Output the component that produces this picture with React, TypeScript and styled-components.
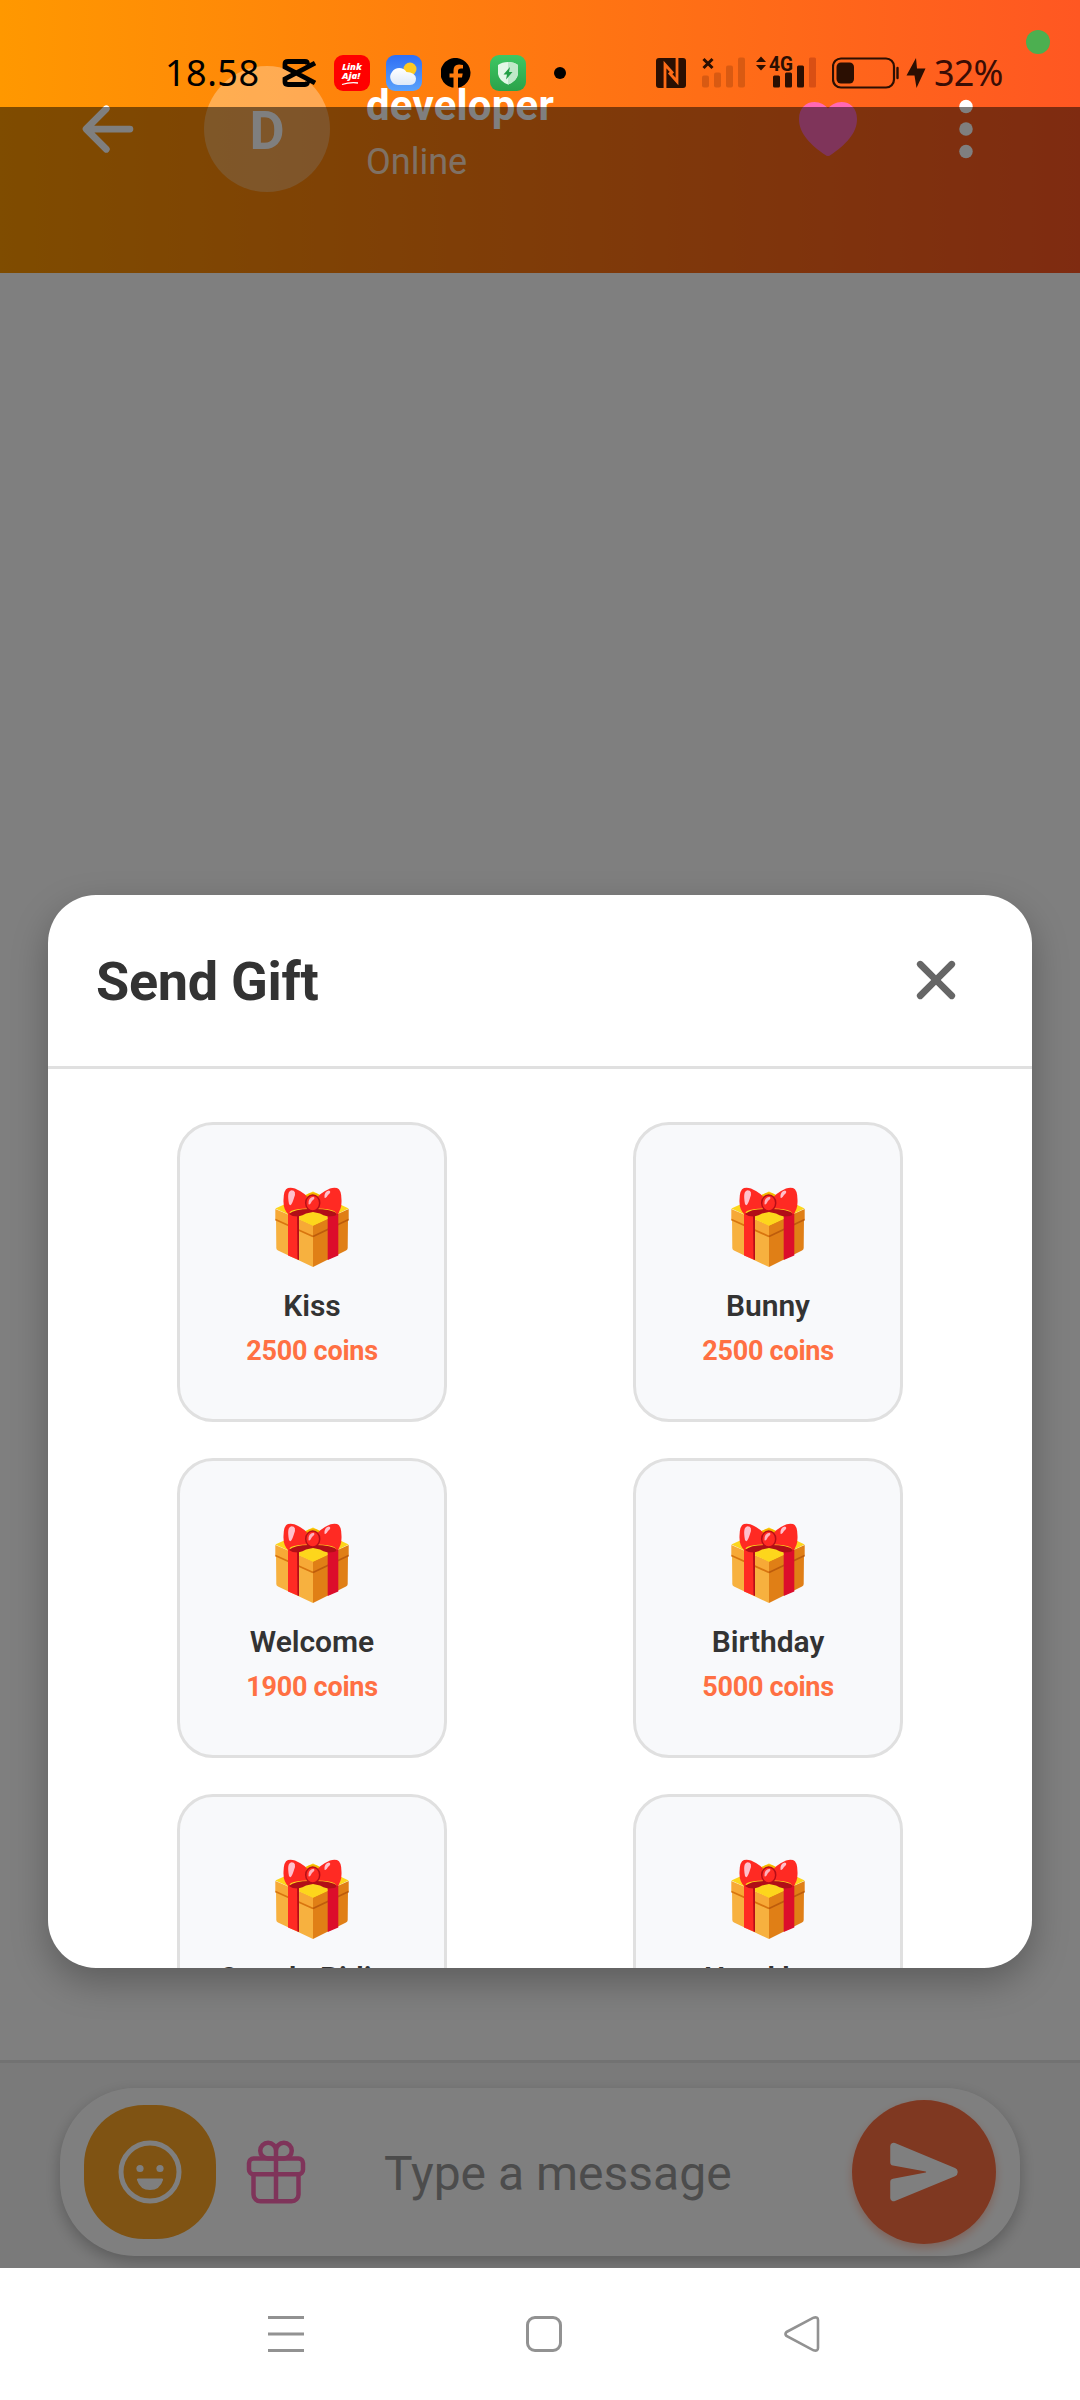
import React from "react";
import styled, { createGlobalStyle } from "styled-components";
import { IoArrowBack, IoHeart, IoEllipsisVertical, IoClose, IoSend, IoGiftOutline } from "react-icons/io5";

const Global = createGlobalStyle`
  body { margin: 0; font-family: Roboto, "Noto Sans", sans-serif; }
  * { box-sizing: border-box; }
`;

const Phone = styled.div`
  position: relative;
  display: flex;
  flex-direction: column;
  width: 1080px;
  height: 2400px;
  overflow: hidden;
  background: #fff;
`;

const Header = styled.header`
  display: flex;
  align-items: flex-start;
  height: 273px;
  padding: 66px 84px 0 78px;
  color: #fff;
  background: linear-gradient(90deg, #ff9800, #ff5722);
`;
const HeaderIcon = styled.div<{ $size: number; $gap?: number; $color?: string }>`
  display: flex;
  align-items: center;
  justify-content: center;
  width: ${(p) => p.$size}px;
  height: 126px;
  margin-right: ${(p) => p.$gap ?? 0}px;
  color: ${(p) => p.$color ?? "#fff"};
  svg { flex: none; }
`;
const Avatar = styled.div`
  display: flex;
  align-items: center;
  justify-content: center;
  width: 126px;
  height: 126px;
  margin-right: 36px;
  padding-top: 3px;
  border-radius: 50%;
  background: rgba(255, 255, 255, 0.3);
  font-size: 54px;
  font-weight: 700;
`;
const Contact = styled.div`
  flex: 1;
  display: flex;
  flex-direction: column;
  padding-top: 13px;
`;
const ContactName = styled.div`
  font-size: 42px;
  line-height: 54px;
  font-weight: 700;
  letter-spacing: 0.2px;
`;
const Presence = styled.div`
  font-size: 36px;
  line-height: 42px;
  margin-top: 8px;
  color: rgba(255, 255, 255, 0.8);
`;

const Chat = styled.main`
  flex: 1;
  background: #fff;
`;

const Composer = styled.section`
  height: 208px;
  padding: 25px 60px 0;
  border-top: 3px solid #e4e4e4;
  background: #f5f5f5;
`;
const Field = styled.div`
  display: flex;
  align-items: center;
  height: 168px;
  padding: 0 24px;
  border-radius: 75px;
  background: #fff;
  box-shadow: 0 6px 16px rgba(0, 0, 0, 0.25);
`;
const EmojiButton = styled.div`
  display: flex;
  align-items: center;
  justify-content: center;
  width: 132px;
  height: 134px;
  border-radius: 60px;
  background: #ffa726;
`;
const GiftButton = styled.div`
  display: flex;
  width: 72px;
  margin-left: 24px;
  color: #ff69b4;
`;
const Placeholder = styled.div`
  flex: 1;
  padding: 4px 0 0 72px;
  font-size: 48px;
  line-height: 56px;
  color: #999;
`;
const SendButton = styled.div`
  display: flex;
  align-items: center;
  justify-content: center;
  width: 144px;
  height: 144px;
  border-radius: 50%;
  color: #fff;
  background: #ff7043;
  box-shadow: 0 4px 10px rgba(255, 112, 67, 0.4);
`;

const NavBar = styled.nav`
  display: flex;
  align-items: center;
  justify-content: space-between;
  height: 132px;
  padding: 0 258px 0 266px;
  background: #fff;
`;

const Scrim = styled.div`
  position: absolute;
  top: 107px;
  left: 0;
  width: 1080px;
  height: 2161px;
  display: flex;
  align-items: flex-start;
  justify-content: center;
  padding-top: 788px;
  background: rgba(0, 0, 0, 0.5);
`;
const Dialog = styled.div`
  display: flex;
  flex-direction: column;
  width: 984px;
  height: 1073px;
  overflow: hidden;
  border-radius: 48px;
  background: #fff;
  box-shadow: 0 14px 36px rgba(0, 0, 0, 0.27);
`;
const DialogHeader = styled.div`
  display: flex;
  align-items: center;
  justify-content: space-between;
  flex: none;
  height: 174px;
  padding: 0 60px 14px 48px;
  border-bottom: 3px solid #e0e0e0;
`;
const DialogTitle = styled.h2`
  margin: 0;
  padding-top: 17px;
  font-size: 54px;
  line-height: 64px;
  font-weight: 700;
  letter-spacing: -0.3px;
  color: #333;
`;
const CloseButton = styled.div`
  display: flex;
  padding-top: 13px;
  color: #666;
`;
const GiftGrid = styled.div`
  display: grid;
  grid-template-columns: repeat(2, 456px);
  justify-content: center;
  justify-items: center;
  row-gap: 36px;
  padding-top: 53px;
`;
const GiftCard = styled.div`
  display: flex;
  flex-direction: column;
  align-items: center;
  width: 270px;
  height: 300px;
  padding-top: 62px;
  border: 3px solid #e0e0e0;
  border-radius: 36px;
  background: #f8f9fb;
`;
const GiftName = styled.div`
  margin-top: 21px;
  font-size: 30px;
  line-height: 36px;
  font-weight: 600;
  letter-spacing: -0.05px;
  color: #333;
  white-space: nowrap;
`;
const GiftPrice = styled.div`
  margin-top: 11px;
  font-size: 27px;
  line-height: 32px;
  font-weight: 700;
  letter-spacing: -0.25px;
  color: #ff7043;
`;

const StatusBar = styled.div`
  position: absolute;
  top: 0;
  left: 0;
  display: flex;
  align-items: center;
  width: 1080px;
  height: 107px;
  padding: 38px 0 0 165px;
  font-family: "Noto Sans", sans-serif;
  font-size: 36px;
`;
const Clock = styled.div<{ $width: number; $tone: string; $spacing: number }>`
  width: ${(p) => p.$width}px;
  line-height: 50px;
  letter-spacing: ${(p) => p.$spacing}px;
  color: ${(p) => p.$tone};
`;
const StatusIcon = styled.div<{ $gap: number }>`
  display: flex;
  margin-right: ${(p) => p.$gap}px;
`;
const PrivacyDot = styled.div`
  position: absolute;
  top: 30px;
  left: 1026px;
  width: 24px;
  height: 24px;
  border-radius: 50%;
  background: #4caf50;
`;

const INK = "#2b0f02";

const GiftBox = () => (
  <svg width="74" height="80" viewBox="0 0 74 80">
    <path d="M1 30 L38 47 V80 L3 63.500 Q1.300 62.500 1.300 61Z" fill="#f7b13f" />
    <path d="M73 30 L38 47 V80 L71 63.500 Q72.700 62.500 72.700 61Z" fill="#e07f16" />
    <path d="M0.300 22 L38 38 V49.500 L0.300 32.500Z" fill="#f7a936" />
    <path d="M73.700 22 L38 38 V49.500 L73.700 32.500Z" fill="#e07f16" />
    <path d="M0.300 32.500 L38 49.500" fill="none" stroke="#d8750f" strokeWidth="1.800" />
    <path d="M38 49.500 L73.700 32.500" fill="none" stroke="#bd5c0c" strokeWidth="1.800" />
    <path d="M0.300 21.500 L38 4.500 L73.700 21.500 L38 38.500Z" fill="#fdd61c" />
    <path d="M13 25 L23.800 29 V73 L13 68.500Z" fill="#ff2a23" />
    <path d="M22 29 H24 V73 L22.500 72.300Z" fill="#b50d18" />
    <path d="M52.700 29 L63.300 25 V68.500 L52.700 73Z" fill="#dc0d2b" />
    <path d="M23.800 32 L38 25.300 L52.700 32 L38 38.700Z" fill="#fdd61c" />
    <path d="M14 27 Q20 21.500 37 22 Q56 21.500 63 27 Q60 29.500 53 29.500 Q48 28.500 45 26.500 L38 25 L31 26.500 Q28 28.500 23 29.500 Q17 29.500 14 27Z" fill="#b10e17" />
    <path d="M30 9 Q37.700 2 46 9 V14 H30Z" fill="#f4b400" />
    <path d="M8.500 13 Q8.500 2.500 13 1 Q18 -.5 25 4 Q30 7 32 9.500 Q29 15 32 21.500 Q21 21.500 16 24 Q13.500 25.500 14 28 Q8 23 8.500 13Z" fill="#ff2a23" />
    <path d="M66.500 13 Q66.500 2.500 62 1 Q57 -.5 50 4 Q45 7 43 9.500 Q46 15 43 21.500 Q54 21.500 59 24 Q62 25.500 61.500 28 Q67 23 66.500 13Z" fill="#ff2a23" />
    <ellipse cx="37.700" cy="16" rx="7" ry="8" fill="#ff2a23" stroke="#b50d18" strokeWidth="1.500" />
    <path d="M14 17 Q11.500 4 16.500 3.200 Q22 3.500 19 11 Q16 21 14 17Z" fill="#ffc1cc" />
    <path d="M49.500 10.500 Q49 4.500 54 3.500 Q57 4.500 53 8 Q50.500 12.500 49.500 10.500Z" fill="#ffc1cc" />
    <path d="M33.500 17 Q33 10.500 38.500 9.800 Q41 11 37 14 Q34.500 19 33.500 17Z" fill="#ffb1bc" />
  </svg>
);

const Smiley = () => (
  <svg width="64" height="64" viewBox="0 0 64 64" fill="#fff">
    <circle cx="32" cy="32" r="29" fill="none" stroke="#fff" strokeWidth="5" />
    <circle cx="22" cy="28.500" r="3.600" />
    <circle cx="42" cy="28.500" r="3.600" />
    <path d="M20 38.500 H44 Q45.500 38.500 45 40 Q42 50 32 50 Q22 50 19 40 Q18.500 38.500 20 38.500Z" />
  </svg>
);

const CapCut = () => (
  <svg width="34" height="28" viewBox="0 0 34 28" fill="none" stroke="#000" strokeWidth="4.800">
    <path d="M33 4 L3 20 V23 Q3 25.500 6 25.500 H23 Q25.500 25.500 25.500 22.500 M33 24 L3 8 V5 Q3 2.500 6 2.500 H23 Q25.500 2.500 25.500 5.500" />
  </svg>
);

const LinkAja = () => (
  <svg width="36" height="36" viewBox="0 0 36 36">
    <rect width="36" height="36" rx="9" fill="#f00" />
    <g fill="#fff" fontFamily="Open Sans, sans-serif" fontWeight="800" fontStyle="italic">
      <text x="8" y="14.500" fontSize="9.500">Link</text>
      <text x="8" y="24" fontSize="9.500">Aja!</text>
    </g>
    <path d="M8 29.500 Q16 27 24 28" fill="none" stroke="#fff" strokeWidth="1.300" />
  </svg>
);

const Weather = () => (
  <svg width="36" height="36" viewBox="0 0 36 36">
    <defs>
      <linearGradient id="sky" x2="0" y2="1"><stop stopColor="#2f6ff5" /><stop offset="1" stopColor="#5ba2fb" /></linearGradient>
      <linearGradient id="cloud" x2="0" y2="1"><stop stopColor="#fff" /><stop offset="1" stopColor="#dfe9f8" /></linearGradient>
    </defs>
    <rect width="36" height="36" rx="9" fill="url(#sky)" />
    <circle cx="24" cy="14" r="6.500" fill="#fdc921" />
    <path d="M12 30 A8 8 0 0 1 6 17 A8.500 8.500 0 0 1 20.500 17 Q29 17 30 23.500 Q30 30 24 30Z" fill="url(#cloud)" />
  </svg>
);

const Facebook = () => (
  <svg width="30" height="30" viewBox="0 0 30 30">
    <path d="M11 29.500 A15 15 0 1 1 17 29.700 V19.500 H21 L21.700 15.500 H17 V13 Q17 10.500 20 10.500 H22 V7 Q12.500 4.500 12.500 12.500 V15.500 H8.500 V19.500 H12.500 V29.500Z" />
  </svg>
);

const Guard = () => (
  <svg width="36" height="36" viewBox="0 0 36 36">
    <defs><linearGradient id="leaf" x2="0" y2="1"><stop stopColor="#3dc763" /><stop offset="1" stopColor="#2ba24a" /></linearGradient></defs>
    <rect width="36" height="36" rx="9" fill="url(#leaf)" />
    <path d="M18 7 Q24 7 28 10 V19 Q27 26 18 29.500 Q9 26 8 19 V10 Q12 7 18 7Z" fill="#e3f8e7" />
    <path d="M18 7 Q24 7 28 10 V19 Q27 26 18 29.500Z" fill="#bfe9c9" />
    <path d="M20 12 L13.500 19.500 H17 L16 24.500 L22.500 17 H19Z" fill="#22a045" />
  </svg>
);

const Nfc = () => (
  <svg width="30" height="30" viewBox="0 0 30 30">
    <rect width="30" height="30" rx="3" fill={INK} />
    <path d="M9 30 V6.500 L17 15.500 M21 0 V23.500 L13 14.500" fill="none" stroke="#ff6c17" strokeWidth="2.800" />
  </svg>
);

const BARS = [
  { x: 0, h: 12 },
  { x: 12, h: 15 },
  { x: 24, h: 22 },
  { x: 36, h: 30 },
];

const NoSignal = () => (
  <svg width="44" height="34" viewBox="0 0 44 34">
    {BARS.map((b) => (
      <rect key={b.x} x={b.x} y={31.5 - b.h} width="7" height={b.h} rx="2" fill="#d95a12" />
    ))}
    <path d="M1.500 3 L10.500 12 M10.500 3 L1.500 12" stroke={INK} strokeWidth="3" />
  </svg>
);

const Signal4G = () => (
  <svg width="60" height="34" viewBox="0 0 60 34" fill={INK}>
    <path d="M0 6 L5 0.500 L10 6Z M0 9 L5 14.500 L10 9Z" />
    <text x="13" y="14.700" fontFamily="Roboto" fontWeight="700" fontSize="20" textLength="24" lengthAdjust="spacingAndGlyphs">4G</text>
    {BARS.map((b, i) => (
      <rect key={b.x} x={b.x + 17} y={31.5 - b.h} width="7" height={b.h} rx="1.500" fill={i < 3 ? INK : "#d94f14"} />
    ))}
  </svg>
);

const Battery = () => (
  <svg width="67" height="32" viewBox="0 0 67 32">
    <rect x="1" y="1.500" width="61" height="29" rx="8" fill="none" stroke={INK} strokeWidth="2.200" />
    <rect x="4.500" y="5.500" width="17.500" height="21" rx="4.500" fill={INK} />
    <path d="M65.500 11 V21" stroke={INK} strokeWidth="2.400" strokeLinecap="round" />
  </svg>
);

const Bolt = () => (
  <svg width="20" height="32" viewBox="0 0 20 32">
    <path d="M10 1 L0.500 18.500 H8.500 L10.500 31 L19.500 11.500 H11Z" fill={INK} />
  </svg>
);

const gifts = [
  { name: "Kiss", price: 2500 },
  { name: "Bunny", price: 2500 },
  { name: "Welcome", price: 1900 },
  { name: "Birthday", price: 5000 },
  { name: "Couple Riding", price: 5000 },
  { name: "Hand bag", price: 5000 },
];

export default function App() {
  return (
    <>
      <Global />
      <Phone>
        <Header>
          <HeaderIcon $size={60} $gap={66}><IoArrowBack size={72} /></HeaderIcon>
          <Avatar>D</Avatar>
          <Contact>
            <ContactName>developer</ContactName>
            <Presence>Online</Presence>
          </Contact>
          <HeaderIcon $size={60} $gap={78} $color="#ff69b4">
            <svg width="58" height="54" viewBox="0 0 58 54" fill="currentColor">
              <path d="M29 54 Q27.500 54 26 52.800 C12 43 0 32 0 17 C0 6 7 0 15.500 0 C21.500 0 26 3 29 6.500 C32 3 36.500 0 42.500 0 C51 0 58 6 58 17 C58 32 46 43 32 52.800 Q30.500 54 29 54Z" />
            </svg>
          </HeaderIcon>
          <HeaderIcon $size={60}><IoEllipsisVertical size={72} /></HeaderIcon>
        </Header>
        <Chat />
        <Composer>
          <Field>
            <EmojiButton><Smiley /></EmojiButton>
            <GiftButton><IoGiftOutline size={72} /></GiftButton>
            <Placeholder>Type a message</Placeholder>
            <SendButton><IoSend size={72} /></SendButton>
          </Field>
        </Composer>
        <NavBar>
          <svg width="40" height="40" viewBox="0 0 40 40" stroke="#929292" strokeWidth="3">
            <path d="M2 3.500 H38 M2 20 H38 M2 36.500 H38" />
          </svg>
          <svg width="40" height="40" viewBox="0 0 40 40" fill="none" stroke="#929292" strokeWidth="3">
            <rect x="3.500" y="3.500" width="33" height="33" rx="7.500" />
          </svg>
          <svg width="40" height="40" viewBox="0 0 40 40" fill="none" stroke="#929292" strokeWidth="2.600">
            <path d="M4.500 18 L31.500 3.700 Q36 2.500 36 6 V34 Q36 37.500 31.500 36.300 L4.500 22 Q2.500 20 4.500 18Z" />
          </svg>
        </NavBar>

        <Scrim>
          <Dialog>
            <DialogHeader>
              <DialogTitle>Send Gift</DialogTitle>
              <CloseButton><IoClose size={72} /></CloseButton>
            </DialogHeader>
            <GiftGrid>
              {gifts.map((g) => (
                <GiftCard key={g.name}>
                  <GiftBox />
                  <GiftName>{g.name}</GiftName>
                  <GiftPrice>{g.price} coins</GiftPrice>
                </GiftCard>
              ))}
            </GiftGrid>
          </Dialog>
        </Scrim>

        <StatusBar>
          <Clock $width={117} $tone="#000" $spacing={0.5}>18.58</Clock>
          <StatusIcon $gap={18}><CapCut /></StatusIcon>
          <StatusIcon $gap={16}><LinkAja /></StatusIcon>
          <StatusIcon $gap={19}><Weather /></StatusIcon>
          <StatusIcon $gap={19}><Facebook /></StatusIcon>
          <StatusIcon $gap={28}><Guard /></StatusIcon>
          <StatusIcon $gap={90}><svg width="12" height="12"><circle cx="6" cy="6" r="6" /></svg></StatusIcon>
          <StatusIcon $gap={16}><Nfc /></StatusIcon>
          <StatusIcon $gap={10}><NoSignal /></StatusIcon>
          <StatusIcon $gap={16}><Signal4G /></StatusIcon>
          <StatusIcon $gap={7}><Battery /></StatusIcon>
          <StatusIcon $gap={8}><Bolt /></StatusIcon>
          <Clock $width={80} $tone="#3a0d05" $spacing={-0.8}>32%</Clock>
          <PrivacyDot />
        </StatusBar>
      </Phone>
    </>
  );
}
